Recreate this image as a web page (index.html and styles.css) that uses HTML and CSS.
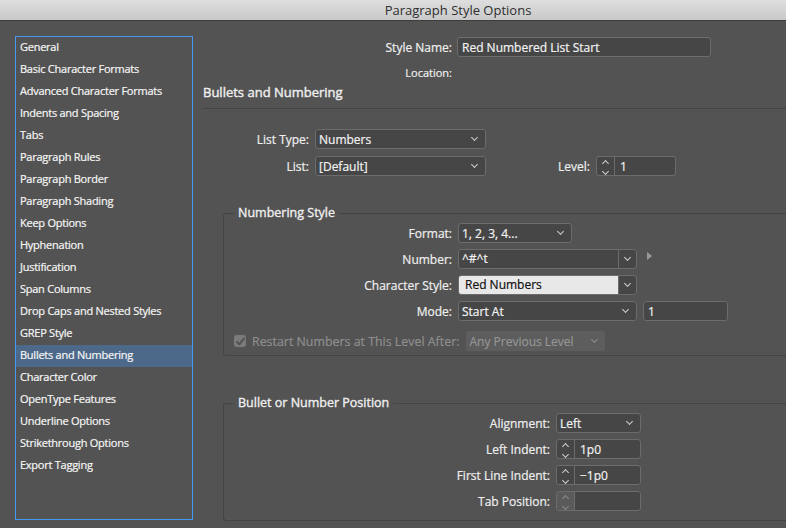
FILE: index.html
```html
<!DOCTYPE html>
<html lang="en">

<head>
	<meta charset="UTF-8">
	<meta name="viewport" content="width=device-width, initial-scale=1.0">
	<title>Paragraph Style Options</title>
	<link rel="stylesheet" href="styles.css">
</head>

<body>
	<div class="titlebar">Paragraph Style Options</div>
	<div class="dialog">
		<ul class="sidebar">
			<li>General</li>
			<li>Basic Character Formats</li>
			<li>Advanced Character Formats</li>
			<li>Indents and Spacing</li>
			<li>Tabs</li>
			<li>Paragraph Rules</li>
			<li>Paragraph Border</li>
			<li>Paragraph Shading</li>
			<li>Keep Options</li>
			<li>Hyphenation</li>
			<li>Justification</li>
			<li>Span Columns</li>
			<li>Drop Caps and Nested Styles</li>
			<li>GREP Style</li>
			<li class="active">Bullets and Numbering</li>
			<li>Character Color</li>
			<li>OpenType Features</li>
			<li>Underline Options</li>
			<li>Strikethrough Options</li>
			<li>Export Tagging</li>
		</ul>

		<div class="main">
			<div class="row row-name">
				<span class="lbl lbl-top">Style Name:</span>
				<div class="text name">Red Numbered List Start</div>
			</div>
			<div class="row row-loc">
				<span class="lbl lbl-top small">Location:</span>
			</div>

			<h2 class="section">Bullets and Numbering</h2>

			<div class="row row-type">
				<span class="lbl lbl-list">List Type:</span>
				<div class="select list-sel"><span>Numbers</span><i class="chev"></i></div>
			</div>
			<div class="row row-list">
				<span class="lbl lbl-list">List:</span>
				<div class="select list-sel"><span>[Default]</span><i class="chev"></i></div>
				<span class="lbl level-lbl">Level:</span>
				<div class="spin level"><span class="arrows"><i class="up"></i><i class="down"></i></span><span class="val">1</span></div>
			</div>

			<fieldset class="group group-num">
				<legend>Numbering Style</legend>
				<div class="row row-first">
					<span class="lbl lbl-num">Format:</span>
					<div class="select fmt"><span>1, 2, 3, 4...</span><i class="chev"></i></div>
				</div>
				<div class="row">
					<span class="lbl lbl-num">Number:</span>
					<div class="combo"><span class="val">^#^t</span><span class="drop"><i class="chev"></i></span></div>
					<i class="tri"></i>
				</div>
				<div class="row">
					<span class="lbl lbl-num">Character Style:</span>
					<div class="combo light"><span class="val">Red Numbers</span><span class="drop"><i class="chev"></i></span></div>
				</div>
				<div class="row">
					<span class="lbl lbl-num">Mode:</span>
					<div class="select mode"><span>Start At</span><i class="chev"></i></div>
					<div class="text start">1</div>
				</div>
				<div class="row row-restart">
					<span class="check"></span>
					<span class="dim">Restart Numbers at This Level After:</span>
					<div class="select off"><span>Any Previous Level</span><i class="chev"></i></div>
				</div>
			</fieldset>

			<fieldset class="group group-pos">
				<legend>Bullet or Number Position</legend>
				<div class="row row-first">
					<span class="lbl lbl-pos">Alignment:</span>
					<div class="select small-sel"><span>Left</span><i class="chev"></i></div>
				</div>
				<div class="row">
					<span class="lbl lbl-pos">Left Indent:</span>
					<div class="spin"><span class="arrows"><i class="up"></i><i class="down"></i></span><span class="val">1p0</span></div>
				</div>
				<div class="row">
					<span class="lbl lbl-pos">First Line Indent:</span>
					<div class="spin"><span class="arrows"><i class="up"></i><i class="down"></i></span><span class="val">&minus;1p0</span></div>
				</div>
				<div class="row">
					<span class="lbl lbl-pos">Tab Position:</span>
					<div class="spin disabled"><span class="arrows"><i class="up"></i><i class="down"></i></span><span class="val"></span></div>
				</div>
			</fieldset>
		</div>
	</div>
</body>

</html>
```

FILE: styles.css
```css
* {
	margin: 0;
	padding: 0;
	box-sizing: border-box;
}

html,
body {
	width: 786px;
	height: 528px;
	overflow: hidden;
}

body {
	background-color: #535353;
	color: #efefef;
	font-family: "Open Sans", "Liberation Sans", sans-serif;
	font-size: 12px;
	white-space: nowrap;
	-webkit-text-stroke: 0.2px currentColor;
}

.titlebar {
	height: 21px;
	line-height: 20px;
	text-align: center;
	font-size: 13px;
	color: #2e2e2e;
	background: linear-gradient(#dedede, #c9c9c9);
	border-bottom: 1px solid #3c3c3c;
	padding-left: 130px;
	-webkit-text-stroke: 0;
}

.dialog {
	display: flex;
	padding: 15px 0 0 15px;
}

/* left list */
.sidebar {
	list-style: none;
	width: 178px;
	height: 484px;
	flex-shrink: 0;
	border: 1px solid #4598ec;
	font-size: 11px;
	color: #f6f6f6;
}

.sidebar li {
	height: 22px;
	line-height: 20px;
	padding-left: 4px;
	letter-spacing: -0.25px;
}

.sidebar li.active {
	background-color: #4d6989;
}

.main {
	flex: 1;
	min-width: 0;
	margin-left: 10px;
}

.row {
	display: flex;
	align-items: center;
	height: 20px;
	margin-top: 6px;
}

.lbl {
	text-align: right;
	margin-right: 6px;
	flex-shrink: 0;
}

.lbl-top {
	width: 249px;
	margin-right: 5px;
}

.lbl-list {
	width: 106px;
}

.lbl-num {
	width: 228px;
}

.lbl-pos {
	width: 326px;
}

.small {
	font-size: 11px;
}

.row-name {
	margin-top: 1px;
}

.row-loc {
	margin-top: 5px;
}

.section {
	font-size: 13px;
	font-weight: normal;
	-webkit-text-stroke: 0.4px currentColor;
	line-height: 16px;
	margin-top: 2px;
	padding-bottom: 8px;
	border-bottom: 1px solid #444;
}

.row-type {
	margin-top: 20px;
}

.row-list {
	margin-top: 7px;
}

/* controls */
.text,
.select,
.combo,
.spin {
	height: 20px;
	flex-shrink: 0;
	border: 1px solid #6c6c6c;
	border-radius: 3px;
	background-color: #464646;
	display: flex;
	align-items: center;
	color: #f2f2f2;
}

.text {
	padding-left: 4px;
}

.name {
	width: 254px;
}

.select {
	justify-content: space-between;
	padding: 0 8px 0 3px;
}

.chev {
	width: 5px;
	height: 5px;
	border-right: 1px solid #cfcfcf;
	border-bottom: 1px solid #cfcfcf;
	transform: rotate(45deg);
	margin-top: -3px;
}

.list-sel {
	width: 171px;
}

.level-lbl {
	margin-left: 72px;
}

.spin {
	width: 85px;
}

.spin.level {
	width: 80px;
}

.spin .arrows {
	width: 18px;
	height: 100%;
	border-right: 1px solid #6c6c6c;
	display: flex;
	flex-direction: column;
	align-items: center;
	justify-content: center;
	gap: 3px;
}

.spin .arrows i {
	width: 5px;
	height: 5px;
	border-left: 1px solid #cfcfcf;
	border-top: 1px solid #cfcfcf;
}

.spin .arrows .up {
	transform: rotate(45deg);
	margin-top: 3px;
}

.spin .arrows .down {
	transform: rotate(-135deg);
}

.spin .val {
	padding-left: 5px;
}

.spin.disabled .arrows {
	background-color: #5a5a5a;
}

.spin.disabled .arrows i {
	border-color: #8a8a8a;
}

/* group boxes */
.group {
	border: 1px solid #444;
	border-right: none;
	border-radius: 3px 0 0 3px;
	margin-left: 20px;
	width: 600px;
}

.group legend {
	margin-left: 10px;
	padding: 0 4px;
	line-height: 16px;
	font-size: 12.5px;
	-webkit-text-stroke: 0.35px currentColor;
}

.group-num {
	margin-top: 29px;
	padding-bottom: 4px;
}

.group-pos {
	margin-top: 39px;
	padding-bottom: 9px;
}

.row-first {
	margin-top: 2px;
}

.fmt {
	width: 114px;
}

.combo {
	width: 179px;
}

.combo .val {
	flex: 1;
	height: 100%;
	line-height: 18px;
	padding-left: 3px;
	border-radius: 2px 0 0 2px;
}

.combo .drop {
	width: 18px;
	height: 100%;
	border-left: 1px solid #6c6c6c;
	display: flex;
	align-items: center;
	justify-content: center;
}

.combo.light .val {
	background-color: #e8e8e8;
	color: #111;
	padding-left: 6px;
}

.tri {
	width: 0;
	height: 0;
	border-top: 4px solid transparent;
	border-bottom: 4px solid transparent;
	border-left: 5px solid #9a9a9a;
	margin: -6px 0 0 10px;
}

.mode {
	width: 179px;
}

.start {
	width: 85px;
	margin-left: 6px;
}

.row-restart {
	margin-top: 10px;
}

.check {
	width: 12px;
	height: 12px;
	border-radius: 3px;
	background-color: #7b7b7b;
	margin: 0 6px 0 10px;
	position: relative;
}

.check::after {
	content: "";
	position: absolute;
	left: 4px;
	top: 1px;
	width: 3px;
	height: 7px;
	border-right: 2px solid #535353;
	border-bottom: 2px solid #535353;
	transform: rotate(40deg);
}

.dim {
	color: #8e8e8e;
	font-size: 12.4px;
	margin-right: 7px;
}

.select.off {
	width: 139px;
	border: none;
	border-radius: 2px;
	background-color: #5d5d5d;
	color: #959595;
}

.select.off .chev {
	border-color: #8e8e8e;
}

.small-sel {
	width: 85px;
}
```
